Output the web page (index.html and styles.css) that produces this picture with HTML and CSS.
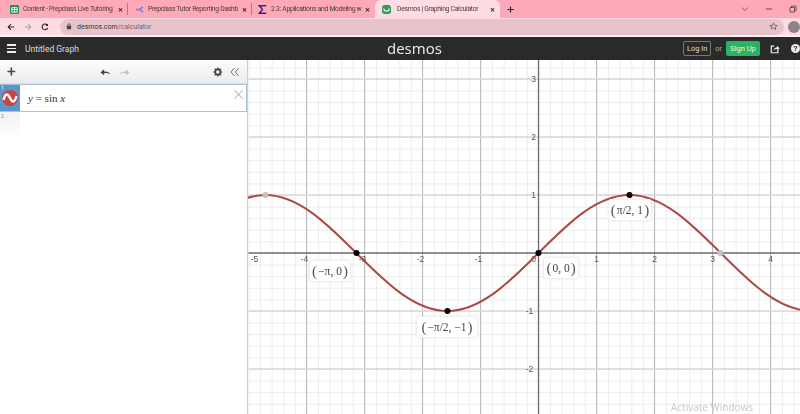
FILE: index.html
```html
<!DOCTYPE html>
<html lang="en">
<head>
    <meta charset="UTF-8">
    <title>Desmos | Graphing Calculator</title>
    <link rel="stylesheet" href="styles.css">
</head>
<body>
<div class="tabstrip">
    <div class="tab tab-first">
        <svg class="favicon" viewBox="0 0 10 10"><rect width="10" height="10" rx="1" fill="#1f8f5f"/><path d="M2 3h6v5H2zM2 5h6M5 3v5" fill="none" stroke="#fff" stroke-width="1"/></svg>
        <span class="tab-title">Content - Prepclass Live Tutoring</span>
        <span class="tab-close">&#10005;</span>
    </div>
    <div class="tab">
        <svg class="favicon" viewBox="0 0 10 10"><path d="M1 5h4M5 5l4-3M5 5l4 3" fill="none" stroke="#6f7fd8" stroke-width="1.6"/></svg>
        <span class="tab-title">Prepclass Tutor Reporting Dashb</span>
        <span class="tab-close">&#10005;</span>
    </div>
    <div class="tab tab-third">
        <svg class="favicon" viewBox="0 0 10 10"><path d="M8.5 1.5V.8H1.5L5 5 1.5 9.2h7v-.7" fill="none" stroke="#3a1a8c" stroke-width="1.5"/></svg>
        <span class="tab-title">2.3: Applications and Modeling w</span>
        <span class="tab-close">&#10005;</span>
    </div>
    <div class="tab tab-active">
        <svg class="favicon" viewBox="0 0 10 10"><rect width="10" height="10" rx="3" fill="#2f9e58"/><path d="M2 4c0 4 6 4 6 0" fill="none" stroke="#fff" stroke-width="1.2"/></svg>
        <span class="tab-title">Desmos | Graphing Calculator</span>
        <span class="tab-close">&#10005;</span>
    </div>
    <svg class="newtab" viewBox="0 0 8 8"><path d="M4 .5v7M.5 4h7" stroke="#222" stroke-width="1.3"/></svg>
    <div class="winctl">
        <svg viewBox="0 0 8 8"><path d="M1 2.5l3 3 3-3" fill="none" stroke="#555" stroke-width=".8"/></svg>
        <svg viewBox="0 0 8 8"><path d="M1 4h6" stroke="#444" stroke-width=".9"/></svg>
        <svg viewBox="0 0 8 8"><path d="M1 2.5h4.5V7H1zM2.5 2.5V1H7v4.5H5.5" fill="none" stroke="#444" stroke-width=".8"/></svg>
    </div>
</div>

<div class="toolbar">
    <svg class="nav" viewBox="0 0 10 10"><path d="M9 5H2M5 1.5L1.5 5 5 8.5" fill="none" stroke="#222" stroke-width="1.3"/></svg>
    <svg class="nav" viewBox="0 0 10 10"><path d="M1 5h7M5 1.5L8.5 5 5 8.5" fill="none" stroke="#a99ca0" stroke-width="1.3"/></svg>
    <svg class="nav" viewBox="0 0 10 10"><path d="M8.3 6.2A3.6 3.6 0 1 1 7.6 2.4" fill="none" stroke="#222" stroke-width="1.3"/><path d="M8.8 .6v3.2H5.6z" fill="#222"/></svg>
    <div class="omnibox">
        <svg class="lock" viewBox="0 0 8 10"><rect x="1" y="4" width="6" height="5" rx=".6" fill="#444"/><path d="M2.3 4.2V2.8a1.7 1.7 0 0 1 3.4 0v1.4" fill="none" stroke="#444"/></svg>
        <span class="url">desmos.com<span class="url-path">/calculator</span></span>
        <svg class="star" viewBox="0 0 10 10"><path d="M5 1l1.2 2.7 2.9.3-2.2 1.9.7 2.9L5 6.3 2.4 7.8l.7-2.9L.9 4l2.9-.3z" fill="none" stroke="#555" stroke-width=".8"/></svg>
    </div>
    <div class="avatar"></div>
</div>

<header class="topbar">
    <div class="hamburger"><span></span><span></span><span></span></div>
    <span class="graph-title">Untitled Graph</span>
    <span class="logo">desmos</span>
    <div class="account">
        <span class="login">Log In</span>
        <span class="or">or</span>
        <span class="signup">Sign Up</span>
        <svg class="share" viewBox="0 0 12 12"><path d="M5 2.5H1.5v8h8V7" fill="none" stroke="#eee" stroke-width="1.4"/><path d="M4.5 7.5C5 5 7 4 8.5 4V2l3 3-3 3V6C7 6 5.5 6.300 4.500 7.500z" fill="#eee"/></svg>
        <span class="help">?</span>
    </div>
</header>

<main class="calc">
    <aside class="panel">
        <div class="panel-bar">
            <svg class="tool-add" viewBox="0 0 10 10"><path d="M5 .5v9M.5 5h9" stroke="#444" stroke-width="1.8"/></svg>
            <div class="undo-redo">
                <svg viewBox="0 0 12 8"><path d="M11.500 7C10 4 7 3 4.500 3.800V1L.5 4.500l4 3V5.400C7 4.600 9.500 5 11.500 7z" fill="#444"/></svg>
                <svg viewBox="0 0 12 8"><path d="M.5 7C2 4 5 3 7.500 3.800V1l4 3.500-4 3V5.400C5 4.600 2.500 5 .5 7z" fill="#c4c4c4"/></svg>
            </div>
            <svg class="tool-gear" viewBox="0 0 10 10"><circle cx="5" cy="5" r="2.700" fill="none" stroke="#444" stroke-width="1.600"/><path d="M5 .4v1.800M5 7.800v1.800M.4 5h1.800M7.800 5h1.800M1.750 1.750l1.270 1.270M6.980 6.980l1.270 1.270M1.750 8.250l1.270-1.270M6.980 3.020l1.270-1.270" stroke="#444" stroke-width="1.500"/></svg>
            <svg class="tool-hide" viewBox="0 0 10 10"><path d="M4.500 1L1 5l3.500 4M9 1L5.500 5 9 9" fill="none" stroke="#555" stroke-width=".9"/></svg>
        </div>
        <div class="expr">
            <div class="expr-tab">
                <span class="expr-num">1</span>
                <svg class="expr-icon" viewBox="0 0 16 16"><circle cx="8" cy="8" r="8" fill="#c74440"/><path d="M1.500 10C3.500 3 5.500 3 8 8s4.500 5 6.500-2" fill="none" stroke="#fff" stroke-width="2.400"/></svg>
            </div>
            <div class="expr-math"><i>y</i> = sin <i>x</i></div>
            <svg class="expr-remove" viewBox="0 0 10 10"><path d="M.5.5l9 9M9.500.5l-9 9" stroke="#bdbdbd" stroke-width="1.200"/></svg>
        </div>
        <div class="empty-tab">2</div>
    </aside>

    <section class="graph">
        <svg class="plane" width="552" height="354">
            <defs>
                <pattern id="minor" width="11.6" height="11.6" patternUnits="userSpaceOnUse" x="290.500" y="193">
                    <path d="M0 0V11.600M0 0H11.600" stroke="#e6e6e6" stroke-width="1.400" fill="none"/>
                </pattern>
            </defs>
            <rect width="552" height="354" fill="url(#minor)"/>
            <g transform="translate(.5 0)">
                <path class="major-v" d="M58 0V354M116 0V354M174 0V354M232 0V354M348 0V354M406 0V354M464 0V354M522 0V354"/>
                <path class="major-h" d="M0 19H552M0 77H552M0 135H552M0 251H552M0 309H552"/>
                <path class="axis" d="M290 0V354M0 193H552"/>
                <g class="ticks">
                    <text x="6" y="202">-5</text><text x="56" y="202">-4</text><text x="114" y="202">-3</text>
                    <text x="172" y="202">-2</text><text x="230" y="202">-1</text><text x="285" y="202">0</text>
                    <text x="348" y="202">1</text><text x="406" y="202">2</text><text x="464" y="202">3</text><text x="522" y="202">4</text>
                    <text x="285" y="22">3</text><text x="285" y="80">2</text><text x="285" y="138">1</text>
                    <text x="281" y="254">-1</text><text x="281" y="312">-2</text>
                </g>
                <path class="curve" d="M-74.400 193c29.700-29.700 58.100-58 91.100-58c33 0 61.400 28.300 91.100 58c29.700 29.700 58.100 58 91.100 58c33 0 61.400-28.300 91.100-58c29.700-29.700 58.100-58 91.100-58c33 0 61.400 28.300 91.100 58c29.700 29.700 58.100 58 91.100 58"/>
                <circle class="pt-hole" cx="17" cy="135" r="3"/>
                <circle class="pt-hole" cx="472" cy="193" r="3"/>
                <circle cx="108" cy="193" r="3"/>
                <circle cx="199" cy="251" r="3"/>
                <circle cx="290" cy="193" r="3"/>
                <circle cx="381" cy="135" r="3"/>
            </g>
        </svg>
        <div class="label label-a"><span class="paren">(</span>&minus;&pi;, 0<span class="paren">)</span></div>
        <div class="label label-b"><span class="paren">(</span>&minus;&pi;/2, &minus;1<span class="paren">)</span></div>
        <div class="label label-c"><span class="paren">(</span>0, 0<span class="paren">)</span></div>
        <div class="label label-d"><span class="paren">(</span>&pi;/2, 1<span class="paren">)</span></div>
        <div class="watermark">Activate Windows</div>
    </section>
</main>
</body>
</html>
```
FILE: styles.css
```css
* {
    box-sizing: border-box;
}

body {
    margin: 0;
    width: 800px;
    height: 414px;
    overflow: hidden;
    font-family: Roboto, "Liberation Sans", sans-serif;
    background: #fff;
    filter: blur(.35px);
}

/* browser chrome */
.tabstrip {
    height: 18px;
    background: #fda9b7;
    display: flex;
    align-items: center;
}

.tab {
    width: 124px;
    height: 18px;
    display: flex;
    align-items: center;
    gap: 4px;
    padding: 0 5px 0 7px;
    position: relative;
}

/* separator between tabs */
.tab::after {
    content: "";
    position: absolute;
    right: 0;
    top: 3px;
    bottom: 3px;
    width: 1px;
    background: #a5808a;
}

.tab-first {
    width: 128px;
    padding-left: 10px;
}

.tab-third {
    width: 123px;
    padding-left: 6px;
}

.tab-third::after {
    display: none;
}

.tab-active {
    width: 125px;
    background: #fddde3;
    border-radius: 6px 6px 0 0;
    gap: 6px;
    padding-left: 7px;
}

.tab-active::after {
    display: none;
}

.favicon {
    width: 9px;
    height: 9px;
    flex: none;
}

.tab-title {
    flex: 1;
    min-width: 0;
    font-size: 6.800px;
    letter-spacing: -.3px;
    color: #4a3a40;
    white-space: nowrap;
}

.tab-close {
    font-size: 6px;
    font-weight: bold;
    color: #222;
    flex: none;
}

.newtab {
    width: 7px;
    height: 7px;
    margin-left: 7px;
}

.winctl {
    margin-left: auto;
    margin-right: 3px;
    display: flex;
    gap: 16px;
}

.winctl svg {
    width: 8px;
    height: 8px;
}

.toolbar {
    height: 19px;
    background: #fddde3;
    display: flex;
    align-items: center;
    padding: 0 0 0 7px;
    gap: 9px;
    border-bottom: 2px solid #fdf0f2;
}

.nav {
    width: 8px;
    height: 8px;
    flex: none;
}

.omnibox {
    height: 16px;
    flex: 1;
    margin-left: 2px;
    background: #e8c3cb;
    border-radius: 8px;
    display: flex;
    align-items: center;
    padding: 0 6px;
    gap: 5px;
}

.lock {
    width: 6px;
    height: 7px;
}

.url {
    font-size: 7px;
    color: #3a3034;
}

.url-path {
    color: #75666b;
}

.star {
    width: 9px;
    height: 9px;
    margin-left: auto;
}

.avatar {
    width: 12px;
    height: 12px;
    border-radius: 50%;
    background: #8d8386;
    margin-left: -5px;
    flex: none;
}

/* desmos header */
.topbar {
    height: 23px;
    background: #2a2a2a;
    display: flex;
    align-items: center;
    padding: 0 0 0 7px;
    position: relative;
}

.hamburger {
    width: 9px;
    display: flex;
    flex-direction: column;
    gap: 2px;
}

.hamburger span {
    height: 1.500px;
    background: #eee;
}

.graph-title {
    font-size: 8.500px;
    color: #ddd;
    margin-left: 9px;
}

.logo {
    position: absolute;
    left: 387px;
    top: 1px;
    font-family: "Open Sans", sans-serif;
    font-size: 15px;
    color: #eee;
}

.account {
    margin-left: auto;
    display: flex;
    align-items: center;
}

.login {
    width: 28px;
    height: 15px;
    border: 1px solid #777;
    border-radius: 2px;
    color: #ddd;
    font-size: 7.500px;
    display: flex;
    align-items: center;
    justify-content: center;
}

.or {
    font-size: 7.500px;
    color: #aaa;
    margin: 0 4px;
}

.signup {
    width: 34px;
    height: 15px;
    background: #2bb361;
    border-radius: 2px;
    color: #e8f7ee;
    font-size: 7.500px;
    display: flex;
    align-items: center;
    justify-content: center;
}

.share {
    width: 10px;
    height: 10px;
    margin-left: 10px;
}

.help {
    width: 9px;
    height: 9px;
    margin-left: 11px;
    border-radius: 50%;
    background: #eee;
    color: #2a2a2a;
    font-size: 8px;
    font-weight: bold;
    line-height: 9px;
    text-align: center;
}

/* calculator body */
.calc {
    display: flex;
    height: 354px;
}

.panel {
    width: 248px;
    flex: none;
    display: flex;
    flex-direction: column;
    border-right: 1px solid #cfcfcf;
    background: #fff;
}

.panel-bar {
    height: 24px;
    flex: none;
    background: linear-gradient(#fcfcfc, #ececec);
    border-bottom: 1px solid #ddd;
    display: flex;
    align-items: center;
    padding: 0 7px;
}

.tool-add {
    width: 9px;
    height: 9px;
}

.undo-redo {
    display: flex;
    gap: 8px;
    margin-left: 84px;
}

.undo-redo svg {
    width: 11px;
    height: 8px;
}

.tool-gear {
    width: 10px;
    height: 10px;
    margin-left: 83px;
}

.tool-hide {
    width: 10px;
    height: 10px;
    margin-left: 8px;
}

.expr {
    height: 28px;
    flex: none;
    display: flex;
    align-items: center;
    border-top: 1px solid #a9c3d6;
    border-bottom: 1px solid #a9c3d6;
    border-right: 1px solid #a9c3d6;
    position: relative;
}

.expr-tab {
    width: 20px;
    height: 100%;
    background: #5a96cb;
    display: flex;
    align-items: center;
    justify-content: center;
    position: relative;
}

.expr-num {
    position: absolute;
    left: 1px;
    top: 0;
    font-size: 5px;
    color: #fff;
}

.expr-icon {
    width: 16px;
    height: 16px;
}

.expr-math {
    margin-left: 8px;
    font-family: "Liberation Serif", serif;
    font-size: 11px;
    color: #333;
}

.expr-remove {
    position: absolute;
    right: 3px;
    top: 5px;
    width: 9px;
    height: 9px;
}

.empty-tab {
    width: 20px;
    height: 27px;
    flex: none;
    background: linear-gradient(#f2f2f2, #fff);
    font-size: 5px;
    color: #777;
    padding: 1px;
}

.graph {
    flex: 1;
    position: relative;
    background: #fff;
    overflow: hidden;
}

.plane {
    display: block;
}

.major-v {
    stroke: #bcbcbc;
    stroke-width: 1;
    fill: none;
}

.major-h {
    stroke: #d9d9d9;
    stroke-width: 1.600;
    fill: none;
}

.axis {
    stroke: #6e6e6e;
    stroke-width: 1.300;
    fill: none;
}

.ticks text {
    font-family: "Liberation Sans", sans-serif;
    font-size: 8.500px;
    fill: #555;
    text-anchor: middle;
}

.curve {
    stroke: #ab4a45;
    stroke-width: 2;
    fill: none;
}

.pt-hole {
    fill: #c2c2c2;
}

.label {
    position: absolute;
    background: #fff;
    border: 1px solid #efefef;
    border-radius: 3px;
    box-shadow: 0 0 3px rgba(0,0,0,0.08);
    font-family: "Liberation Serif", serif;
    font-size: 11.500px;
    color: #444;
    height: 22px;
    display: flex;
    align-items: center;
    justify-content: center;
    gap: 1px;
    white-space: nowrap;
}

.paren {
    font-size: 15px;
    font-weight: normal;
    color: #555;
}

.label-a {
    left: 61px;
    top: 200px;
    width: 42px;
}

.label-b {
    left: 168px;
    top: 256px;
    width: 62px;
}

.label-c {
    left: 295px;
    top: 197px;
    width: 36px;
}

.label-d {
    left: 360px;
    top: 139px;
    width: 44px;
}

.watermark {
    position: absolute;
    left: 423px;
    bottom: 0;
    font-size: 10px;
    font-family: "Open Sans", sans-serif;
    color: #c8c8c8;
}
```
